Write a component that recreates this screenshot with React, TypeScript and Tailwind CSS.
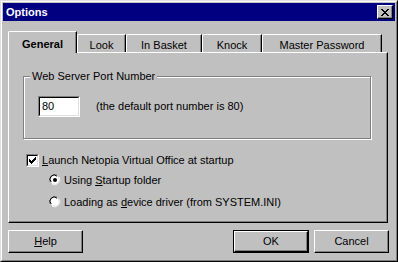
import React from "react";

const font = { fontFamily: '"Liberation Sans", Arial, sans-serif' };

function Tab({ label, width, active }: { label: string; width: number; active?: boolean }) {
  if (active) {
    return (
      <div
        className="relative z-10 -mb-px flex h-[22px] items-start justify-center rounded-tl-[2px] border-l border-t border-r border-l-white border-t-white border-r-black bg-[#c0c0c0] pt-[4px] text-[11px] font-bold text-black shadow-[inset_-1px_0_0_#808080]"
        style={{ width }}
      >
        {label}
      </div>
    );
  }
  return (
    <div
      className="flex h-[18px] items-start justify-center rounded-tl-[2px] border-l border-t border-r border-l-white border-t-white border-r-black pt-[2px] text-[11px] text-black shadow-[inset_-1px_0_0_#808080]"
      style={{ width }}
    >
      {label}
    </div>
  );
}

function Button({ children, isDefault, width }: { children: React.ReactNode; isDefault?: boolean; width: number }) {
  const inner = (
    <div className="flex h-full w-full items-center justify-center border-l border-t border-r border-b border-l-white border-t-white border-r-black border-b-black text-[11px] text-black shadow-[inset_-1px_-1px_0_#808080]">
      {children}
    </div>
  );
  if (isDefault) {
    return (
      <div className="h-[23px] border border-black" style={{ width }}>
        {inner}
      </div>
    );
  }
  return (
    <div className="h-[23px]" style={{ width }}>
      {inner}
    </div>
  );
}

function Radio({ checked }: { checked?: boolean }) {
  return (
    <svg width="12" height="12" viewBox="0 0 12 12" className="shrink-0">
      <path d="M8 1 A5.5 5.5 0 0 0 1 8" fill="none" stroke="#808080" />
      <path d="M10.5 3.5 A5.5 5.5 0 0 1 3.5 10.5" fill="none" stroke="#ffffff" />
      <circle cx="6" cy="6" r="4.5" fill="#ffffff" />
      <path d="M8 2.2 A4 4 0 0 0 2.2 8" fill="none" stroke="#000000" />
      <path d="M9.6 4 A4 4 0 0 1 4 9.6" fill="none" stroke="#dfdfdf" />
      {checked && <circle cx="6" cy="6" r="2" fill="#000000" />}
    </svg>
  );
}

export default function App() {
  return (
    <div className="h-[262px] w-[398px] bg-[#c0c0c0]" style={font}>
      <div className="h-full w-full border-l border-t border-r border-b border-l-[#dfdfdf] border-t-[#dfdfdf] border-r-black border-b-black">
        <div className="flex h-full w-full flex-col border-l border-t border-r border-b border-l-white border-t-white border-r-[#808080] border-b-[#808080] p-px">
          {/* Title bar */}
          <div className="flex h-[18px] items-center justify-between bg-[#000080] pl-[3px] pr-[2px]">
            <span className="text-[11px] font-bold text-white">Options</span>
            <div className="flex h-[14px] w-[16px] items-center justify-center border-l border-t border-r border-b border-l-white border-t-white border-r-black border-b-black bg-[#c0c0c0] shadow-[inset_-1px_-1px_0_#808080]">
              <svg width="8" height="7" viewBox="0 0 8 7">
                <path d="M0 0h2v1h1v1h2V1h1V0h2v1H7v1H6v1H5v1h1v1h1v1h1v1H6V6H5V5H3v1H2v1H0V6h1V5h1V4h1V3H2V2H1V1H0z" fill="#000" />
              </svg>
            </div>
          </div>

          <div className="flex flex-1 flex-col px-[5px]">
            {/* Tabs */}
            <div className="mt-[10px] flex items-end">
              <Tab label="General" width={69} active />
              <Tab label="Look" width={49} />
              <Tab label="In Basket" width={76} />
              <Tab label="Knock" width={60} />
              <Tab label="Master Password" width={120} />
            </div>

            {/* Panel */}
            <div className="h-[171px] w-[380px] border-l border-t border-r border-b border-l-white border-t-white border-r-black border-b-black text-[11px] text-black shadow-[inset_-1px_-1px_0_#808080]">
              <fieldset className="ml-[14px] mt-[16px] h-[70px] w-[348px] border border-[#808080] shadow-[inset_1px_1px_0_#fff,1px_1px_0_#fff]">
                <legend className="ml-[6px] bg-[#c0c0c0] px-[2px] leading-[14px]">Web Server Port Number</legend>
                <div className="ml-[14px] mt-[13px] flex items-center">
                  <div className="h-[21px] w-[42px] border-l border-t border-r border-b border-l-[#808080] border-t-[#808080] border-r-white border-b-white">
                    <div className="flex h-full w-full items-center border-l border-t border-r border-b border-l-black border-t-black border-r-[#dfdfdf] border-b-[#dfdfdf] bg-white pl-[2px]">
                      80
                    </div>
                  </div>
                  <span className="ml-[16px]">(the default port number is 80)</span>
                </div>
              </fieldset>

              <div className="ml-[17px] mt-[13px] flex items-center gap-[3px]">
                <div className="h-[13px] w-[13px] border-l border-t border-r border-b border-l-[#808080] border-t-[#808080] border-r-white border-b-white">
                  <div className="flex h-full w-full items-center justify-center border-l border-t border-r border-b border-l-black border-t-black border-r-[#dfdfdf] border-b-[#dfdfdf] bg-white">
                    <svg width="7" height="7" viewBox="0 0 7 7">
                      <path d="M0 2h1v1h1v1h1V3h1V2h1V1h1V0h1v3H6v1H5v1H4v1H3v1H2V6H1V5H0z" fill="#000" />
                    </svg>
                  </div>
                </div>
                <span>
                  <u>L</u>aunch Netopia Virtual Office at startup
                </span>
              </div>

              <div className="ml-[40px] mt-[3px] flex items-center gap-[3px]">
                <Radio checked />
                <span>
                  Using <u>S</u>tartup folder
                </span>
              </div>
              <div className="ml-[40px] mt-[6px] flex items-center gap-[3px]">
                <Radio />
                <span>
                  Loading as <u>d</u>evice driver (from SYSTEM.INI)
                </span>
              </div>
            </div>

            {/* Buttons */}
            <div className="mt-[7px] flex items-center">
              <Button width={75}>
                <span>
                  <u>H</u>elp
                </span>
              </Button>
              <div className="ml-auto mr-[1px] flex gap-[5px]">
                <Button width={76} isDefault>
                  OK
                </Button>
                <Button width={75}>Cancel</Button>
              </div>
            </div>
          </div>
        </div>
      </div>
    </div>
  );
}
